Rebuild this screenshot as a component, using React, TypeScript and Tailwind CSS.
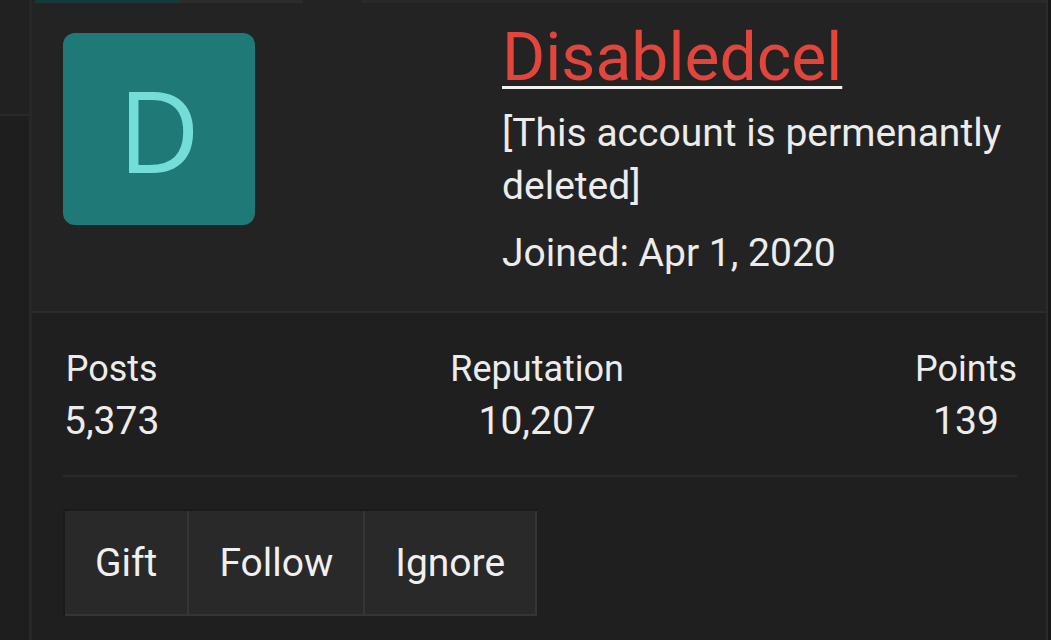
import React from "react";

export default function App() {
  const font = { fontFamily: "Roboto, 'Liberation Sans', sans-serif" };
  return (
    <div className="w-[1051px] h-[640px] flex overflow-hidden bg-[#1c1c1c]" style={font}>
      {/* left strip */}
      <div className="w-[29px] flex flex-col shrink-0">
        <div className="h-[114px] bg-[#212121]" />
        <div className="h-[2px] bg-[#2a2a2a]" />
        <div className="flex-1 bg-[#1e1e1e]" />
      </div>
      <div className="w-[3px] shrink-0 bg-[#272727]" />

      {/* card */}
      <div className="flex-1 flex flex-col min-w-0">
        {/* top strip */}
        <div className="h-[3px] flex shrink-0 bg-[#2a2a2a]">
          <div className="w-[3px] bg-[#232323]" />
          <div className="w-[145px] bg-[#153a3a]" />
          <div className="w-[123px] bg-[#2c2c2c]" />
          <div className="w-[59px] bg-[#232323]" />
          <div className="flex-1 bg-[#292929]" />
        </div>

        {/* header */}
        <div className="h-[308px] bg-[#232323] flex items-start pl-[31px] pt-[22px]">
          <div className="mt-[8px] w-[192px] h-[192px] rounded-[12px] bg-[#1f7a77] flex items-center justify-center shrink-0">
            <span
              className="text-[113px] leading-none text-[#74ddd8]"
              style={{ fontFamily: "'Open Sans', 'Noto Sans', sans-serif" }}
            >
              D
            </span>
          </div>
          <div className="ml-[247px] flex flex-col">
            <span className="text-[66px] leading-none text-[#e2453c] underline decoration-[#f2f2f2] decoration-[3px] underline-offset-[6px] self-start">
              Disabledcel
            </span>
            <div className="mt-[16px] text-[39px] leading-[53px] text-[#ececec] w-[520px]">
              [This account is permenantly deleted]
            </div>
            <div className="mt-[14px] text-[39px] leading-[53px] text-[#ececec]">
              Joined: Apr 1, 2020
            </div>
          </div>
        </div>

        <div className="h-[2px] bg-[#2b2b2b] shrink-0" />

        {/* stats */}
        <div className="flex-1 bg-[#1f1f1f] pl-[31px] pr-[29px] pt-[30px]">
          <div className="flex justify-between text-[#ececec] pl-[1px] pr-0">
            {[
              ["Posts", "5,373"],
              ["Reputation", "10,207"],
              ["Points", "139"],
            ].map(([l, v]) => (
              <div key={l} className="flex flex-col items-center">
                <span className="text-[36px] leading-[52px]">{l}</span>
                <span className="text-[39px] leading-[52px]">{v}</span>
              </div>
            ))}
          </div>
          <div className="mt-[28px] h-[2px] bg-[#2a2a2a]" />
          <div className="mt-[32px] inline-flex border-t-2 border-l-2 border-[#1a1a1a]">
            {["Gift", "Follow", "Ignore"].map((b) => (
              <div
                key={b}
                className="bg-[#292929] border-r-2 border-b-2 border-[#353535] px-[30px] pt-[30px] pb-[28px] text-[39px] leading-[45px] text-[#f0f0f0]"
              >
                {b}
              </div>
            ))}
          </div>
        </div>
      </div>

      <div className="w-[2px] shrink-0 bg-[#2b2b2b]" />
      <div className="w-[3px] shrink-0 bg-[#181818]" />
    </div>
  );
}
